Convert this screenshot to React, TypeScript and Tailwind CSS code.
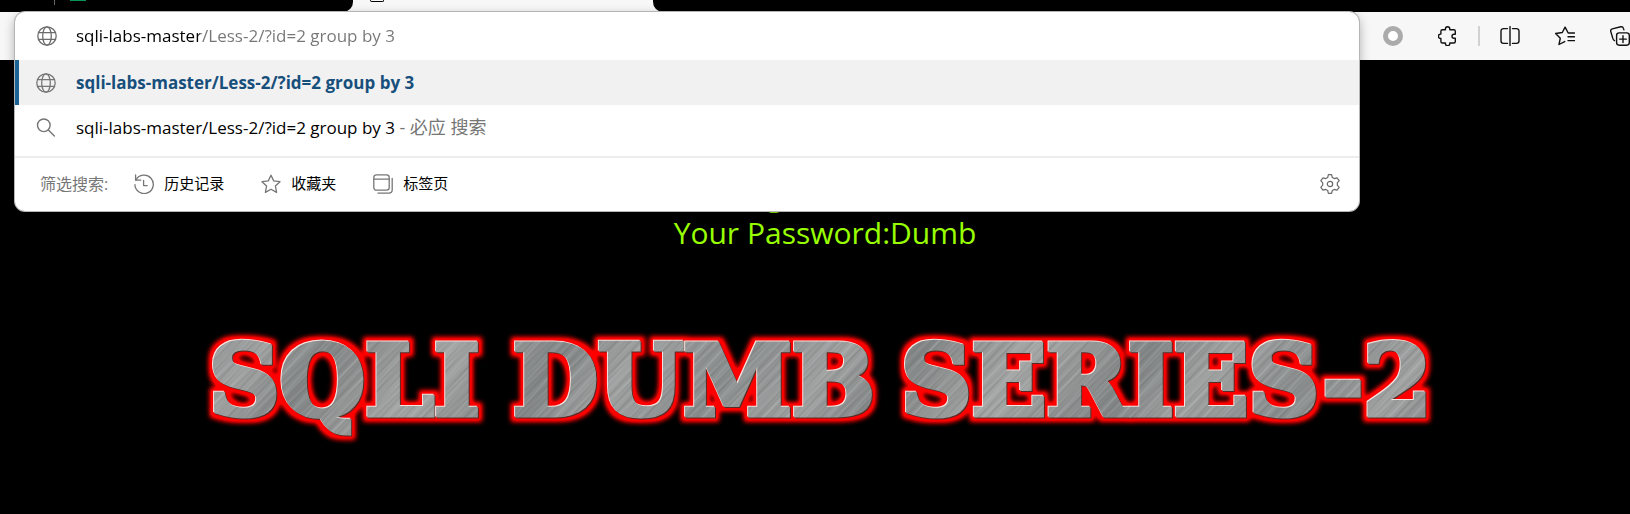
import type { ReactNode } from "react";

const line = {
  fill: "none",
  stroke: "currentColor",
  strokeLinecap: "round" as const,
  strokeLinejoin: "round" as const,
};

function Icon({ children, width = 1.3 }: { children: ReactNode; width?: number }) {
  return (
    <svg viewBox="0 0 20 20" className="size-5 shrink-0" aria-hidden="true" {...line} strokeWidth={width}>
      {children}
    </svg>
  );
}

const Globe = () => (
  <Icon width={1.3}>
    <circle cx="10" cy="10" r="9.2" />
    <ellipse cx="10" cy="10" rx="4.3" ry="9.2" />
    <path d="M1.5 6.7h17M1.5 13.3h17" />
  </Icon>
);

const Search = () => (
  <Icon width={1.4}>
    <circle cx="7.8" cy="7.3" r="6.3" />
    <path d="M12.4 12l6 6" />
  </Icon>
);

const History = () => (
  <Icon>
    <path d="M1.6 1v5.2h5.2" />
    <path d="M2 6A9.2 9.2 0 1 1 .9 10.6" />
    <path d="M9.6 6.4v5.2h3.6" />
  </Icon>
);

const Star = () => (
  <Icon>
    <path d="M10 1.2l2.7 5.7 6.3.8-4.6 4.3 1.2 6.4-5.6-3.1-5.6 3.1 1.2-6.4L1 7.7l6.3-.8z" />
  </Icon>
);

const Tabs = () => (
  <Icon>
    <rect x=".8" y=".8" width="15.4" height="15.4" rx="2.6" />
    <path d="M.8 5.2h15.4M19.2 4.5v11.300a3.400 3.400 0 0 1-3.400 3.400H5" />
  </Icon>
);

const Gear = () => (
  <Icon width={1.2}>
    <circle cx="10" cy="10" r="2.7" />
    <path d="M8.400.7h3.200l.7 2.800 1.900 1.100 2.800-.8 2.200 2.900-1.900 2.100v2.400l1.900 2.100-2.200 2.900-2.800-.8-1.900 1.100-.7 2.800H8.400l-.7-2.800-1.900-1.100-2.800.8L.8 13.300l1.900-2.100V8.800L.8 6.700 3 3.800l2.800.8 1.900-1.100z" />
  </Icon>
);

const Ring = () => (
  <svg viewBox="0 0 20 20" className="size-5" aria-hidden="true">
    <circle cx="10" cy="10" r="7.5" fill="#fff" stroke="#ababab" strokeWidth="5" />
  </svg>
);

const Puzzle = () => (
  <Icon width={1.4}>
    <path d="M4.400 3.800h3V3a2.200 2.200 0 0 1 4.400 0v.8h4a1.500 1.500 0 0 1 1.500 1.500v3h-1.300a2 2 0 0 0 0 4h1.300v3.200a1.500 1.500 0 0 1-1.500 1.500h-4v.5a2.200 2.200 0 0 1-4.400 0V17h-3a1.500 1.500 0 0 1-1.500-1.500v-3h-.3a2.200 2.200 0 0 1 0-4.400h.3V5.300a1.500 1.500 0 0 1 1.500-1.500z" />
  </Icon>
);

const Split = () => (
  <Icon width={1.4}>
    <path d="M10 .6v18.800M7.500 2.600H3.600A2.600 2.600 0 0 0 1 5.200v9.600a2.600 2.600 0 0 0 2.600 2.600h3.900M12.500 2.600h3.900A2.600 2.600 0 0 1 19 5.200v9.600a2.600 2.600 0 0 1-2.600 2.600h-3.900" />
  </Icon>
);

const Favorites = () => (
  <Icon width={1.4}>
    <path d="M19.5 7h-6.300L10.100 1.200 7.300 6.500.6 7.500l4.700 4.700L4 18.500l5.700-2.900M13 10.800h6.500M13 14.600h6.500" />
  </Icon>
);

const Collections = () => (
  <Icon width={1.4}>
    <rect x="6.6" y="6.9" width="12.7" height="12.3" rx="2.6" />
    <path d="M13 9.700v6.800M9.600 13.100h6.800M4.500 14.600A3.500 3.500 0 0 1 2.700 12L.8 5.600a2.200 2.200 0 0 1 1.500-2.700l8.500-2.100a2.200 2.200 0 0 1 2.600 1.600l.5 1.500" />
  </Icon>
);

function ToolButton({ label, children }: { label: string; children: ReactNode }) {
  return (
    <button type="button" aria-label={label} className="flex size-8 shrink-0 items-center justify-center">
      {children}
    </button>
  );
}

function Filter({ label, children }: { label: string; children: ReactNode }) {
  return (
    <button type="button" className="flex items-center gap-[10px] text-[15px] text-black">
      <span className="text-[#767676]">{children}</span>
      {label}
    </button>
  );
}

const query = "sqli-labs-master/Less-2/?id=2 group by 3";

function AddressPopup() {
  return (
    <section className="absolute top-3 right-[271px] left-[15px] z-10 overflow-hidden rounded-[10px] bg-white text-[17px] shadow-[0_0_0_1px_#b5b5b5,0_4px_12px_#00000055]">
      <label className="flex h-12 items-center gap-[19px] pr-5 pl-[22px] text-[#6b6b6b]">
        <Globe />
        <input
          type="text"
          aria-label="地址"
          defaultValue={query}
          className="min-w-0 flex-1 bg-[linear-gradient(90deg,#000_0_124px,#767676_124px)] bg-clip-text text-transparent outline-none"
        />
      </label>
      <ul>
        <li>
          <a href="#result" className="flex h-[45px] items-center gap-5 border-l-4 border-[#1a6394] bg-[#f1f1f1] pl-[17px] font-bold text-[#174f7c]">
            <span className="text-[#767676]"><Globe /></span>
            {query}
          </a>
        </li>
        <li className="pb-[6px]">
          <a href="#search" className="flex h-[45px] items-center gap-5 pl-[21px] text-black">
            <span className="text-[#767676]"><Search /></span>
            <span>
              {query} <span className="text-lg leading-none text-[#767676]">- 必应 搜索</span>
            </span>
          </a>
        </li>
      </ul>
      <div className="flex h-[55px] items-center border-t-2 border-[#ececec] pr-[19px] pb-[2px] pl-[25px]">
        <span className="mr-[26px] text-base text-[#767676]">筛选搜索:</span>
        <div className="flex flex-1 items-center gap-[37px]">
          <Filter label="历史记录"><History /></Filter>
          <Filter label="收藏夹"><Star /></Filter>
          <Filter label="标签页"><Tabs /></Filter>
        </div>
        <button type="button" aria-label="设置" className="text-[#6b6b6b]"><Gear /></button>
      </div>
    </section>
  );
}

function Banner() {
  return (
    <svg viewBox="0 0 1280 150" className="mt-14 w-[1280px] max-w-full" role="img" aria-label="SQLI DUMB SERIES-2">
      <defs>
        <linearGradient id="sheen" gradientUnits="userSpaceOnUse" x1="0" y1="0" x2="190" y2="140" spreadMethod="reflect">
          <stop offset="0" stopColor="#8a8d8d" />
          <stop offset=".35" stopColor="#a0a2a2" />
          <stop offset=".6" stopColor="#828585" />
          <stop offset="1" stopColor="#a5a6a6" />
        </linearGradient>
        <pattern id="coarse" width="31" height="60" patternUnits="userSpaceOnUse" patternTransform="rotate(42)">
          <path d="M2 0v60M12 0v60M19 0v60" stroke="#5f6262" strokeOpacity=".3" />
          <path d="M7 0v60M24 0v60" stroke="#d0d2d2" strokeOpacity=".3" />
        </pattern>
        <pattern id="fine" width="17" height="60" patternUnits="userSpaceOnUse" patternTransform="rotate(46)">
          <path d="M1 0v60M6 0v60" stroke="#5f6262" strokeOpacity=".25" strokeWidth=".8" />
          <path d="M4 0v60M13 0v60" stroke="#d0d2d2" strokeOpacity=".25" strokeWidth=".8" />
        </pattern>
        <pattern id="steel" width="1280" height="150" patternUnits="userSpaceOnUse">
          <rect width="1280" height="150" fill="url(#sheen)" />
          <rect width="1280" height="150" fill="url(#coarse)" />
          <rect width="1280" height="150" fill="url(#fine)" />
        </pattern>
        <filter id="metal" filterUnits="userSpaceOnUse" x="0" y="0" width="1280" height="150" colorInterpolationFilters="sRGB">
          <feMorphology in="SourceAlpha" operator="dilate" radius="4" result="wide" />
          <feGaussianBlur in="wide" stdDeviation="2.8" result="soft" />
          <feComponentTransfer in="soft" result="halo">
            <feFuncA type="linear" slope="1.4" />
          </feComponentTransfer>
          <feFlood floodColor="#ff0000" />
          <feComposite in2="halo" operator="in" result="glow" />
          <feOffset in="SourceAlpha" dx="-1" dy="-1" result="up" />
          <feFlood floodColor="#f5e4e0" />
          <feComposite in2="up" operator="in" result="light" />
          <feOffset in="SourceAlpha" dx="1" dy="1" result="down" />
          <feFlood floodColor="#5c2a26" />
          <feComposite in2="down" operator="in" result="dark" />
          <feMerge>
            <feMergeNode in="glow" />
            <feMergeNode in="dark" />
            <feMergeNode in="light" />
            <feMergeNode in="SourceGraphic" />
          </feMerge>
        </filter>
      </defs>
      <g
        filter="url(#metal)"
        fill="url(#steel)"
        stroke="url(#steel)"
        strokeWidth="5"
        fontSize="98"
        fontWeight="700"
        className="font-['DejaVu_Serif',serif]"
      >
        <text x="24" y="107">SQLI</text>
        <text x="328" y="107">DUMB</text>
        <text x="716" y="107">SERIES-2</text>
      </g>
    </svg>
  );
}

export default function App() {
  return (
    <div className="relative min-h-screen overflow-hidden bg-black font-['Open_Sans','Noto_Sans_CJK_SC',sans-serif]">
      <header>
        <div className="flex h-3 items-start bg-[#f7f7f7]">
          <div className="flex h-full w-[353px] items-start rounded-br-[10px] bg-black pl-[54px]">
            <span className="h-[5px] w-px bg-[#666]" />
            <span className="ml-[15px] h-px w-4 bg-[#079455]" />
          </div>
          <div className="w-[300px] pl-[17px]">
            <div className="h-[2px] w-[14px] rounded-b-sm border-x border-b border-black" />
          </div>
          <div className="h-full flex-1 rounded-bl-[10px] bg-black" />
        </div>
        <div className="flex h-12 items-center justify-end bg-[#f7f7f7] text-[#111]">
          <div className="-mr-[6px] flex items-center gap-[23px]">
            <ToolButton label="扩展状态"><Ring /></ToolButton>
            <ToolButton label="扩展"><Puzzle /></ToolButton>
            <div className="-mx-[9px] h-5 w-[2px] bg-[#d1d1d1]" />
            <ToolButton label="分屏"><Split /></ToolButton>
            <ToolButton label="收藏夹"><Favorites /></ToolButton>
            <ToolButton label="集锦"><Collections /></ToolButton>
          </div>
        </div>
      </header>
      <AddressPopup />
      <main className="flex flex-col items-center pt-[116px] pl-5">
        <p className="text-center text-[30px] leading-[38px] text-[#99ff00]">
          Your Login name:Dumb
          <br />
          Your Password:Dumb
        </p>
        <Banner />
      </main>
    </div>
  );
}
